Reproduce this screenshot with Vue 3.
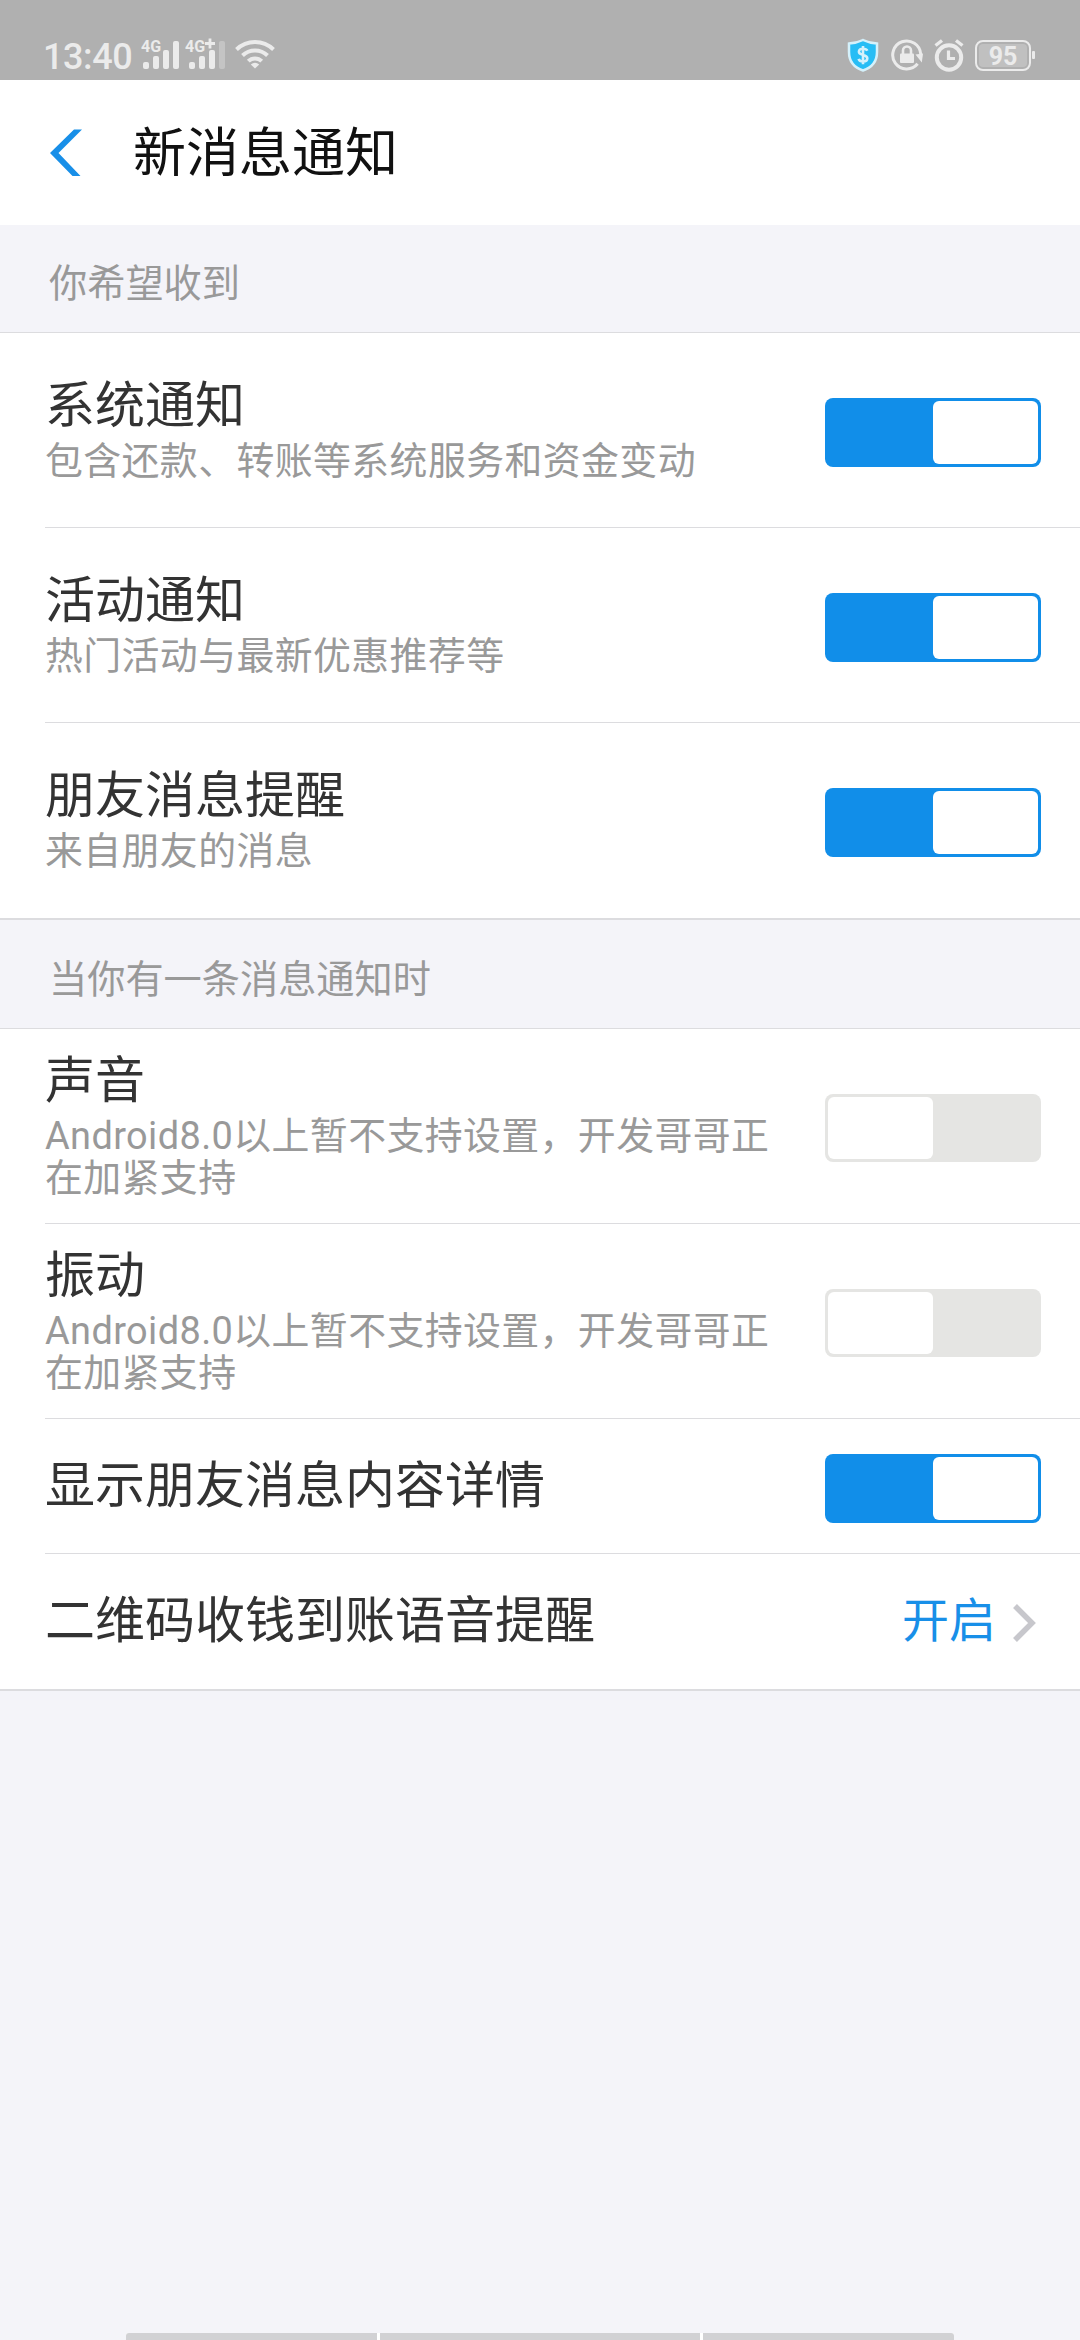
<template>
  <div class="page">
    <div class="status-bar">
      <span class="clock">13:40</span>
      <svg class="signal" width="40" height="32" viewBox="0 0 40 32">
        <text x="0" y="14" class="net">4G</text>
        <rect x="2" y="24" width="6" height="7" rx="2" />
        <rect x="12" y="18" width="6" height="13" rx="2" />
        <rect x="22" y="12" width="6" height="19" rx="2" />
        <rect x="32" y="3" width="6" height="28" rx="2" />
      </svg>
      <svg class="signal second" width="44" height="32" viewBox="0 0 44 32">
        <text x="0" y="14" class="net">4G</text>
        <path d="M20 5.500h10M25 0.500v10" stroke="#ebebeb" stroke-width="2.800" />
        <rect x="4" y="24" width="6" height="7" rx="2" />
        <rect x="14" y="18" width="6" height="13" rx="2" />
        <rect x="24" y="12" width="6" height="19" rx="2" />
        <rect x="34" y="3" width="6" height="28" rx="2" fill="#c4c4c4" />
      </svg>
      <svg class="wifi" width="42" height="32" viewBox="0 0 42 32" fill="none" stroke="#ebebeb" stroke-width="4">
        <path d="M2.500 11.500C13 1.500 29 1.500 39.500 11.500" />
        <path d="M8.500 17.500C15.500 10.800 26.500 10.800 33.500 17.500" />
        <path d="M14.300 23.200C18 19.500 24 19.500 27.700 23.200" />
        <path d="M21 30.500L16.800 26.500Q21 23 25.200 26.500Z" fill="#ebebeb" stroke="none" />
      </svg>
      <span class="spacer"></span>
      <svg width="34" height="34" viewBox="0 0 34 34">
        <path d="M17 2C21.500 4.200 26 5.300 31 5.600V14C31 23 26 29.500 17 32.500C8 29.500 3 23 3 14V5.600C8 5.300 12.500 4.200 17 2Z" fill="#27bdf5" stroke="#d5f1fb" stroke-width="2.500" />
        <path d="M21.300 12.800C20.500 11 19 10.700 17 10.700C14.300 10.700 12.900 12 12.900 13.800C12.900 18 21.300 15.800 21.300 20.300C21.300 22.300 19.600 23.500 17 23.500C14.700 23.500 13.100 22.700 12.600 20.900M17 8V26.200" fill="none" stroke="#d5f1fb" stroke-width="2.600" />
      </svg>
      <svg class="lock" width="34" height="34" viewBox="0 0 34 34">
        <path d="M27.600 25.800A14 14 0 1 1 30.700 16" fill="none" stroke="#ebebeb" stroke-width="3" />
        <path d="M25.500 16.500L33 15.500L31.800 24.500Z" fill="#ebebeb" />
        <rect x="10" y="15.500" width="14" height="9.500" rx="1" fill="#ebebeb" />
        <path d="M13 16V12.500a4 4 0 0 1 8 0V16" fill="none" stroke="#ebebeb" stroke-width="2.600" />
      </svg>
      <svg class="alarm" width="32" height="34" viewBox="0 0 32 34" fill="none" stroke="#ebebeb">
        <circle cx="16" cy="19.500" r="12.200" stroke-width="4" />
        <path d="M15.500 12.500V20.500H22" stroke-width="3.200" />
        <path d="M2.500 7.500L9 2.500M29.500 7.500L23 2.500" stroke-width="3.400" />
      </svg>
      <div class="battery"><span>95</span></div>
    </div>

    <header class="nav">
      <svg class="back" width="34" height="48" viewBox="0 0 34 48">
        <path d="M25 0.500H33L9.500 24L31.500 47H23.500L1 24Z" fill="#188fe8" />
      </svg>
      <h1>新消息通知</h1>
    </header>

    <section v-for="group in groups" :key="group.title">
      <div class="group-title">{{ group.title }}</div>
      <ul class="list">
        <li v-for="item in group.items" :key="item.label" :class="['row', { compact: !item.desc }]">
          <div class="info">
            <div class="label">{{ item.label }}</div>
            <div v-if="item.desc" class="desc">{{ item.desc }}</div>
          </div>
          <div v-if="item.link" class="link">
            <span>{{ item.link }}</span>
            <svg width="26" height="42" viewBox="0 0 26 42">
              <path d="M4 4L21 21L4 38" fill="none" stroke="#c7c7cc" stroke-width="5.500" />
            </svg>
          </div>
          <button
            v-else
            :class="['switch', { on: item.on, disabled: item.disabled }]"
            :disabled="item.disabled"
            @click="item.on = !item.on"
          >
            <span class="knob"></span>
          </button>
        </li>
      </ul>
    </section>

    <div class="gesture-bar">
      <span></span>
      <span class="middle"></span>
      <span></span>
    </div>
  </div>
</template>

<script setup>
import { ref } from 'vue'

const unsupported = 'Android8.0以上暂不支持设置，开发哥哥正在加紧支持'

const groups = ref([
  {
    title: '你希望收到',
    items: [
      { label: '系统通知', desc: '包含还款、转账等系统服务和资金变动', on: true },
      { label: '活动通知', desc: '热门活动与最新优惠推荐等', on: true },
      { label: '朋友消息提醒', desc: '来自朋友的消息', on: true }
    ]
  },
  {
    title: '当你有一条消息通知时',
    items: [
      { label: '声音', desc: unsupported, on: false, disabled: true },
      { label: '振动', desc: unsupported, on: false, disabled: true },
      { label: '显示朋友消息内容详情', on: true },
      { label: '二维码收钱到账语音提醒', link: '开启' }
    ]
  }
])
</script>

<style>
body {
  margin: 0;
  background: #f4f4f9;
}
</style>

<style scoped>
.page {
  display: flex;
  flex-direction: column;
  width: 1080px;
  height: 2340px;
  overflow: hidden;
  background: #f4f4f9;
  font-family: Roboto, "Noto Sans CJK SC", sans-serif;
}

.status-bar {
  display: flex;
  align-items: flex-start;
  box-sizing: border-box;
  height: 80px;
  flex: none;
  padding: 38px 45px 0 43px;
  background: #b0b0b0;
  color: #ebebeb;
}

.clock {
  width: 98px;
  font-size: 36px;
  font-weight: 500;
  line-height: 39px;
  letter-spacing: -0.4px;
}

.signal {
  fill: #ebebeb;
}

.second {
  margin-left: 4px;
}

.net {
  font-size: 16px;
  font-weight: 700;
}

.wifi {
  margin-left: 5px;
}

.spacer {
  flex: 1;
}

.lock {
  margin-left: 10px;
}

.alarm {
  margin-left: 9px;
}

.battery {
  position: relative;
  box-sizing: border-box;
  width: 56px;
  height: 31px;
  margin: 2px 4px 0 10px;
  padding: 2px;
  border: 2px solid #ebebeb;
  border-radius: 8px;
}

.battery span {
  display: block;
  height: 23px;
  border-radius: 4px;
  background: #c0c0c0;
  font-size: 25px;
  font-weight: 700;
  line-height: 25px;
  text-align: center;
}

.battery::after {
  content: '';
  position: absolute;
  top: 9px;
  right: -6px;
  width: 3px;
  height: 8px;
  border-radius: 1px;
  background: #ebebeb;
}

.nav {
  display: flex;
  align-items: center;
  flex: none;
  height: 145px;
  padding-left: 49px;
  background: #fff;
}

.nav h1 {
  margin: 2px 0 0 50px;
  font-size: 53px;
  font-weight: 400;
  line-height: 60px;
  color: #111;
}

.group-title {
  box-sizing: border-box;
  height: 108px;
  padding: 38px 49px 0;
  border-bottom: 1px solid #dcdcdf;
  font-size: 38.2px;
  line-height: 42px;
  color: #999;
}

section + section .group-title {
  height: 109px;
  padding-top: 39px;
}

.list {
  margin: 0;
  padding: 0;
  border-bottom: 2px solid #dcdcdf;
  background: #fff;
  list-style: none;
}

.row {
  display: flex;
  align-items: center;
  justify-content: space-between;
  box-sizing: border-box;
  height: 195px;
  margin-left: 45px;
  padding-right: 39px;
  border-bottom: 1px solid #dcdcdf;
}

.row.compact {
  height: 135px;
}

.row:last-child {
  border-bottom-color: transparent;
}

.info {
  width: 735px;
}

.label {
  font-size: 50px;
  line-height: 58px;
  color: #333;
}

.desc {
  margin-top: 5px;
  padding-bottom: 1px;
  font-size: 37.9px;
  line-height: 42px;
  letter-spacing: 0.4px;
  color: #999;
}

.switch {
  display: flex;
  box-sizing: border-box;
  width: 216px;
  height: 69px;
  margin: 5px 0 0;
  padding: 3px;
  border: none;
  border-radius: 8px;
  background: #e5e5e3;
}

.switch.disabled {
  height: 68px;
  margin-top: 4px;
}

.switch.on {
  justify-content: flex-end;
  background: #118ee9;
}

.knob {
  width: 105px;
  border-radius: 6px;
  background: #fff;
}

.link {
  display: flex;
  align-items: center;
  font-size: 47px;
  line-height: 58px;
  color: #188fe8;
}

.link svg {
  margin: 4px 4px 0 15px;
}

.gesture-bar {
  display: flex;
  gap: 3px;
  width: 828px;
  height: 7px;
  margin: auto auto 0;
  border-radius: 3px 3px 0 0;
  background: #fff;
  overflow: hidden;
}

.gesture-bar span {
  width: 251px;
  background: #d1d1d4;
}

.gesture-bar .middle {
  width: 320px;
}
</style>
